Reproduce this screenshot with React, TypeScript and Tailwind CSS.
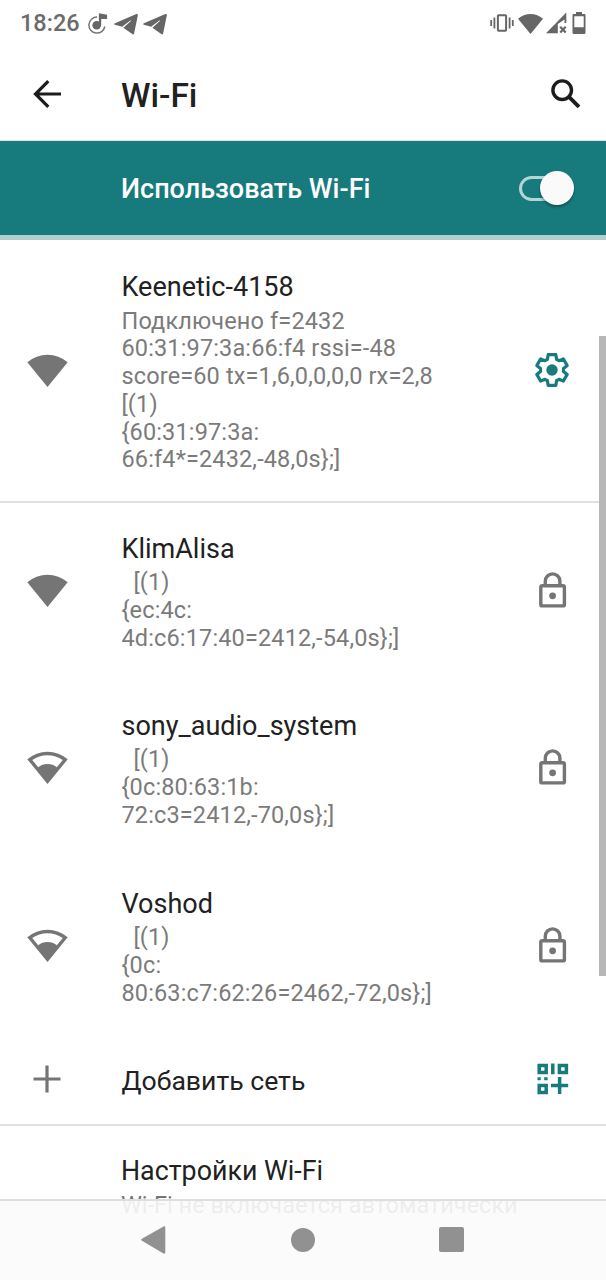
import type { ReactNode } from 'react'

interface Network {
  name: string
  lines: string[]
  level: 'full' | 'medium'
  action: 'settings' | 'lock'
  height: string
}

const networks: Network[] = [
  {
    name: 'Keenetic-4158',
    lines: [
      'Подключено f=2432',
      '60:31:97:3a:66:f4 rssi=-48',
      'score=60 tx=1,6,0,0,0,0 rx=2,8',
      '[(1)',
      '{60:31:97:3a:',
      '66:f4*=2432,-48,0s};]',
    ],
    level: 'full',
    action: 'settings',
    height: 'h-[263px] border-b-2 border-[#e0e0e0]',
  },
  {
    name: 'KlimAlisa',
    lines: ['  [(1)', '{ec:4c:', '4d:c6:17:40=2412,-54,0s};]'],
    level: 'full',
    action: 'lock',
    height: 'h-[175px]',
  },
  {
    name: 'sony_audio_system',
    lines: ['  [(1)', '{0c:80:63:1b:', '72:c3=2412,-70,0s};]'],
    level: 'medium',
    action: 'lock',
    height: 'h-[179px]',
  },
  {
    name: 'Voshod',
    lines: ['  [(1)', '{0c:', '80:63:c7:62:26=2462,-72,0s};]'],
    level: 'medium',
    action: 'lock',
    height: 'h-[177px]',
  },
]

function WifiIcon({ level }: { level: 'full' | 'medium' }) {
  return (
    <svg className="mb-[2px]" width="41" height="34" viewBox="0 0 41 34" fill="#757575">
      {level === 'full' ? (
        <path d="M20.5 34 .3 9.3A31 31 0 0 1 40.7 9.3Z" />
      ) : (
        <>
          <path
            fillRule="evenodd"
            d="M20.5 34 .3 9.3A31 31 0 0 1 40.7 9.3ZM20.5 28.5 35.8 10A27 27 0 0 0 5.2 10Z"
          />
          <path d="M20.5 33 10 18.4A14.5 14.5 0 0 1 31 18.4Z" />
        </>
      )}
    </svg>
  )
}

function GearIcon() {
  return (
    <svg className="mr-px mb-px" width="36" height="36" viewBox="-18 -18 36 36">
      <path
        d="M-3.8-15.4H3.8L4.6-10.7 7-9.3 11.4-11 15.2-4.4 11.5-1.4V1.4L15.2 4.4 11.4 11 7 9.3 4.6 10.7 3.8 15.4H-3.8L-4.6 10.7-7 9.3-11.4 11-15.2 4.4-11.5 1.4V-1.4L-15.2-4.4-11.4-11-7-9.3-4.6-10.7Z"
        fill="none"
        stroke="#177b7e"
        strokeWidth="3.2"
        strokeLinejoin="round"
      />
      <circle r="5.7" fill="#177b7e" />
    </svg>
  )
}

function LockIcon() {
  return (
    <svg className="mb-[2px]" width="28" height="36" viewBox="0 0 28 36" fill="none" stroke="#757575" strokeWidth="3.4">
      <rect x="1.8" y="13.7" width="23.6" height="20.2" rx="1.5" />
      <path d="M6.3 13.5V9.2a7.3 7.3 0 0 1 14.6 0v4.3" />
      <circle cx="13.6" cy="23.8" r="3.4" fill="#757575" stroke="none" />
    </svg>
  )
}

function QrAddIcon() {
  return (
    <svg className="mb-px" width="32" height="32" viewBox="0 0 32 32" fill="none" stroke="#177b7e" strokeWidth="3.5">
      <path d="M2.2 2.4h7v7h-7zM22.4 2.4h7v7h-7zM2.2 22.4h7v7h-7zM15.8.6v10.6M22.6 14v17M14 22.6h17.2" />
      <path d="M.5 15.8h3.2M7.2 15.8h3.4" strokeWidth="3" />
    </svg>
  )
}

function TelegramIcon() {
  return (
    <svg width="24" height="21" viewBox="0 0 24 21" fill="#666">
      <path d="M22.4.1.9 9.2c-1 .5-.9 1.3 0 1.6l7.2 2L16.4 6.6c.6-.4.9 0 .5.4l-7.5 6.8 9.2 6.4c.7.4 1.3.2 1.5-.8L23.8 1.5c.2-1.1-.5-1.7-1.4-1.4Z" />
    </svg>
  )
}

function StatusBar() {
  return (
    <div className="flex h-12 items-center justify-between pl-5 pr-5 text-[#6b6b6b]">
      <div className="flex items-center">
        <span className="w-[60px] text-[23.5px] leading-none font-medium whitespace-nowrap">18:26</span>
        <svg className="ml-2" width="20" height="22" viewBox="0 0 20 22">
          <path d="M9 4.1a8 8 0 1 0 7.8 9.4" fill="none" stroke="#777" strokeWidth="1.5" />
          <circle cx="8.7" cy="12.2" r="4.3" fill="#666" />
          <path d="M10.9 12V.3l8.2 1.4v4.4h-5.9V12Z" fill="#666" />
        </svg>
        <div className="ml-[6px] flex gap-[5px]">
          <TelegramIcon />
          <TelegramIcon />
        </div>
      </div>
      <div className="flex items-center pb-[2px]">
        <svg width="24" height="18" viewBox="0 0 24 18" fill="none" stroke="#666">
          <rect x="7.9" y="1.2" width="8.2" height="15.6" rx=".8" strokeWidth="2" />
          <path d="M4.4 3.6v10.8M1.2 6v6M19.6 3.6v10.8M22.8 6v6" strokeWidth="1.8" />
        </svg>
        <svg className="ml-1" width="25" height="21" viewBox="0 0 25 21" fill="#666">
          <path d="M12.5 21 0 5.8A19 19 0 0 1 25 5.8Z" />
        </svg>
        <svg className="ml-[3px]" width="21" height="22" viewBox="0 0 21 22">
          <path fill="#666" fillRule="evenodd" d="M0 21.2 20.3.5v10.4h-1.8V7.5L11.8 12v9.2Z" />
          <path d="m14.2 14.7 5.5 5.7m0-5.7-5.5 5.7" stroke="#666" strokeWidth="2.2" />
        </svg>
        <svg className="ml-[5px]" width="14" height="22" viewBox="0 0 14 22" fill="#666">
          <path fillRule="evenodd" d="M4 0h6v2h2.5c.6 0 1 .5 1 1.2v17.4c0 .8-.4 1.4-1 1.4h-11c-.6 0-1-.6-1-1.4V3.2c0-.7.4-1.2 1-1.2H4ZM2.3 4.2v11h9.4v-11Z" />
        </svg>
      </div>
    </div>
  )
}

function ListRow({ icon, action, className, children }: {
  icon?: ReactNode
  action?: ReactNode
  className: string
  children: ReactNode
}) {
  return (
    <div className={`flex items-center ${className}`}>
      <div className="flex w-[94px] shrink-0 justify-center">{icon}</div>
      <div className="flex-1 pl-[27.5px]">{children}</div>
      <div className="flex w-[107px] shrink-0 justify-center">{action}</div>
    </div>
  )
}

export default function App() {
  return (
    <div className="relative h-[1280px] w-[606px] overflow-hidden bg-white font-[Roboto,sans-serif] text-[#212121]">
      <StatusBar />

      {/* Toolbar */}
      <header className="flex h-[93px] items-center border-b border-[#d5e8e8] pl-[33px] pr-[25px]">
        <svg className="mb-px" width="28" height="28" viewBox="0 0 28 28" fill="none" stroke="#1c1c1c" strokeWidth="3.2">
          <path d="M28 14H3M15.3 1.2 2.5 14l12.8 12.8" />
        </svg>
        <h1 className="ml-[60px] flex-1 pt-1 text-[33.5px] leading-10 font-medium">Wi-Fi</h1>
        <svg className="mb-px" width="30" height="30" viewBox="0 0 30 30" fill="none" stroke="#1c1c1c">
          <circle cx="11.2" cy="11.2" r="9.3" strokeWidth="3.4" />
          <path d="m17.7 17.7 10.3 10.2" strokeWidth="3.8" />
        </svg>
      </header>

      {/* Main switch */}
      <div className="flex h-[99px] items-center border-b-[5px] border-[#b3cecf] bg-[#177b7e] pl-[121px] pr-8">
        <span className="flex-1 pt-px text-[27px] leading-8 font-medium text-white">Использовать Wi-Fi</span>
        <div className="flex h-[34px] w-[55px] items-center">
          <div className="h-[25px] w-[47px] rounded-full border-[3px] border-[#b3d5d6]" />
          <div className="-ml-[26px] size-[34px] shrink-0 rounded-full bg-[#fafafa] shadow-[0_2px_3px_rgba(0,0,0,0.35)]" />
        </div>
      </div>

      {networks.map((network) => (
        <ListRow
          key={network.name}
          className={network.height}
          icon={<WifiIcon level={network.level} />}
          action={network.action === 'lock' ? <LockIcon /> : <GearIcon />}
        >
          <div className="pt-1 text-[27px] leading-8">{network.name}</div>
          <div className="mt-[4.5px] text-[23.5px] leading-[27.75px] tracking-[0.14px] whitespace-pre text-[#7b7b7b]">
            {network.lines.map((line) => (
              <div key={line}>{line}</div>
            ))}
          </div>
        </ListRow>
      ))}

      <ListRow
        className="h-[92px] border-b-2 border-[#e0e0e0]"
        icon={
          <svg className="mb-px" width="28" height="28" viewBox="0 0 28 28" stroke="#757575" strokeWidth="3.2">
            <path d="M14 .5v27M.5 14h27" />
          </svg>
        }
        action={<QrAddIcon />}
      >
        <div className="pt-[3px] text-[26.6px] leading-8">Добавить сеть</div>
      </ListRow>

      <div className="pt-[29px] pl-[121px] whitespace-nowrap">
        <div className="text-[26.8px] leading-8">Настройки Wi-Fi</div>
        <div className="mt-[5px] text-[23.5px] leading-[27.75px] text-[#757575]">Wi-Fi не включается автоматически</div>
      </div>

      {/* Scrollbar */}
      <div className="absolute top-[336px] right-0 h-[640px] w-[7px] bg-[#b7b7b7]" />

      {/* Navigation bar */}
      <nav className="absolute inset-x-0 bottom-0 flex h-[81px] items-center border-t-2 border-[#dedede] bg-[#fbfbfb]/90 pb-0.5 pl-[141px]">
        <svg width="25" height="28" viewBox="0 0 25 28" fill="#919191">
          <path d="M22.5.4.9 12.8c-.9.5-.9 1.4 0 1.9l21.6 12.8c1 .5 1.8 0 1.8-1V1.4c0-1-.8-1.5-1.8-1Z" />
        </svg>
        <div className="ml-[125px] size-6 rounded-full bg-[#919191]" />
        <div className="ml-[124px] size-[25px] rounded-xs bg-[#919191]" />
      </nav>
    </div>
  )
}
